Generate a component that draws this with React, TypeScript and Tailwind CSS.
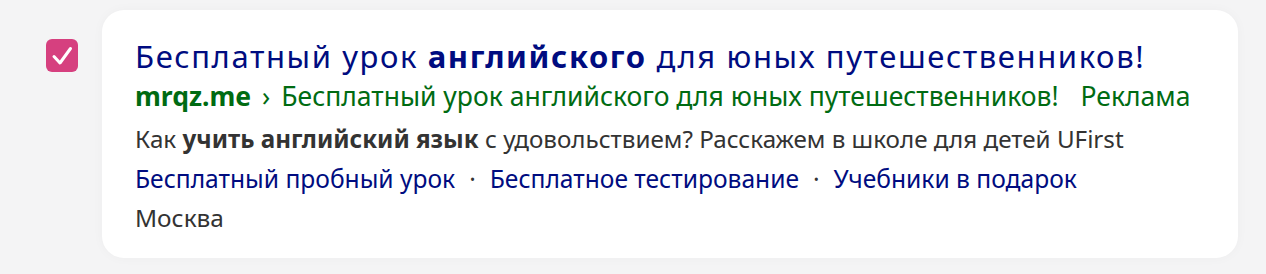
import React from 'react';

function CheckBox() {
  return (
    <div className="w-[32px] h-[33px] rounded-[6px] bg-[#d6407f] flex items-center justify-center">
      <svg width="22" height="20" viewBox="0 0 22 20" fill="none">
        <path d="M3 10.5 L9 17 L19.5 2.5" stroke="white" strokeWidth="3" strokeLinecap="round" strokeLinejoin="round" />
      </svg>
    </div>
  );
}

export default function App() {
  const links = ['Бесплатный пробный урок', 'Бесплатное тестирование', 'Учебники в подарок'];

  return (
    <div
      className="w-[1266px] h-[274px] bg-[#f4f4f5] flex pt-[10px]"
      style={{ fontFamily: '"Noto Sans", "Open Sans", sans-serif' }}
    >
      <div className="pl-[46px] pt-[29px]">
        <CheckBox />
      </div>
      <div className="ml-[24px] w-[1136px] h-[248px] bg-white rounded-[22px] shadow-[0_0_12px_rgba(0,0,0,0.03)] pl-[33px] pt-[26px]">
        {/* заголовок */}
        <div className="text-[31px] leading-[40px] tracking-[1.6px] text-[#000c80] whitespace-nowrap">
          Бесплатный урок <b className="font-bold">английского</b> для юных путешественников!
        </div>

        {/* домен */}
        <div className="text-[26.5px] leading-[40px] text-[#006b12] whitespace-nowrap">
          <b className="font-bold">mrqz.me</b>
          <span className="mx-[11px]">›</span>
          Бесплатный урок английского для юных путешественников!
          <span className="ml-[22px]">Реклама</span>
        </div>

        {/* описание */}
        <div className="mt-[3px] text-[24.2px] leading-[40px] text-[#333333] whitespace-nowrap">
          Как <b className="font-bold">учить английский язык</b> с удовольствием? Расскажем в школе для детей UFirst
        </div>

        {/* быстрые ссылки */}
        <div className="flex items-center text-[24.6px] leading-[40px] text-[#000c80] whitespace-nowrap">
          {links.map((l, i) => (
            <React.Fragment key={l}>
              {i > 0 && <span className="mx-[14px] text-[#333333]">·</span>}
              <span>{l}</span>
            </React.Fragment>
          ))}
        </div>

        <div className="text-[24.4px] leading-[37px] text-[#333333]">Москва</div>
      </div>
    </div>
  );
}
